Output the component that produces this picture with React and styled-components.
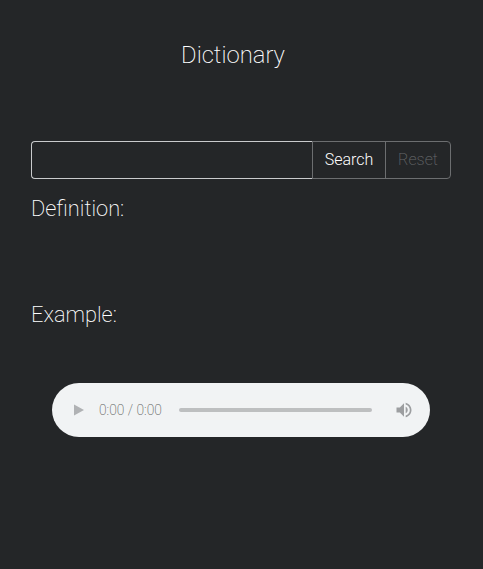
import styled, { createGlobalStyle } from 'styled-components';

const GlobalStyle = createGlobalStyle`
  html, body {
    margin: 0;
    padding: 0;
    background: #242628;
  }
`;

const Page = styled.div`
  width: 483px;
  height: 569px;
  box-sizing: border-box;
  padding: 0 32px 0 31px;
  display: flex;
  flex-direction: column;
  background: #242628;
  color: #ffffff;
  font-family: Roboto, "Liberation Sans", sans-serif;
  font-weight: 200;
  overflow: hidden;
`;

const Title = styled.h1`
  margin: 41px 16px 0 0;
  height: 28px;
  font-size: 23.8px;
  line-height: 28px;
  font-weight: 200;
  text-align: center;
`;

const SearchGroup = styled.form`
  display: flex;
  height: 38px;
  margin-top: 72px;
`;

const SearchInput = styled.input`
  flex: 1;
  min-width: 0;
  box-sizing: border-box;
  height: 38px;
  padding: 0 12px;
  background: transparent;
  border: 1px solid #c9cbcd;
  border-right: none;
  border-radius: 4px 0 0 4px;
  color: #ffffff;
  outline: none;
`;

const GroupButton = styled.button`
  box-sizing: border-box;
  height: 38px;
  width: ${({ $width }) => $width}px;
  margin-left: -1px;
  padding: 0 0 2px;
  background: transparent;
  border: 1px solid #6c6e70;
  border-radius: ${({ $last }) => ($last ? '0 4px 4px 0' : '0')};
  color: ${({ disabled }) => (disabled ? '#66686a' : '#ffffff')};
  font-family: Roboto, "Liberation Sans", sans-serif;
  font-weight: ${({ disabled }) => (disabled ? 200 : 300)};
  font-size: 16px;
`;

const Label = styled.div`
  font-size: 21.8px;
  line-height: 25px;
  height: 25px;
  margin-top: ${({ $top }) => $top}px;
`;

const Player = styled.div`
  align-self: center;
  box-sizing: border-box;
  width: 378px;
  height: 54px;
  margin-top: 56px;
  padding: 0 16px 0 20px;
  display: flex;
  align-items: center;
  background: #f1f3f4;
  border-radius: 27px;
  color: #5c5e60;
`;

const PlayIcon = styled.svg`
  width: 14px;
  height: 14px;
  flex: none;
  fill: #b0b2b4;
`;

const Time = styled.span`
  margin-left: 13px;
  font-size: 13.8px;
  font-weight: 200;
  line-height: 16px;
  white-space: nowrap;
  width: 64px;
`;

const Track = styled.div`
  width: 193px;
  height: 4px;
  margin-left: 16px;
  flex: none;
  border-radius: 2px;
  background: #bdbfc0;
`;

const VolumeIcon = styled.svg`
  width: 20px;
  height: 20px;
  flex: none;
  margin-left: auto;
  fill: #9c9ea0;
`;

export default function App() {
  return (
    <>
      <GlobalStyle />
      <Page>
        <Title>Dictionary</Title>
        <SearchGroup onSubmit={(e) => e.preventDefault()}>
          <SearchInput type="text" />
          <GroupButton type="button" $width={74}>Search</GroupButton>
          <GroupButton type="button" $width={66} $last disabled>Reset</GroupButton>
        </SearchGroup>
        <Label $top={17}>Definition:</Label>
        <Label $top={81}>Example:</Label>
        <Player>
          <PlayIcon viewBox="0 0 14 14"><path d="M2 1.5 L12 7 L2 12.5 Z" /></PlayIcon>
          <Time>0:00 / 0:00</Time>
          <Track />
          <VolumeIcon viewBox="0 0 24 24">
            <path d="M3 9v6h4l5 5V4L7 9H3zm13.5 3c0-1.77-1.02-3.29-2.5-4.03v8.05c1.48-.73 2.5-2.25 2.5-4.02zM14 3.23v2.06c2.89.86 5 3.54 5 6.71s-2.11 5.85-5 6.71v2.06c4.01-.91 7-4.49 7-8.77s-2.99-7.86-7-8.77z" />
          </VolumeIcon>
        </Player>
      </Page>
    </>
  );
}
